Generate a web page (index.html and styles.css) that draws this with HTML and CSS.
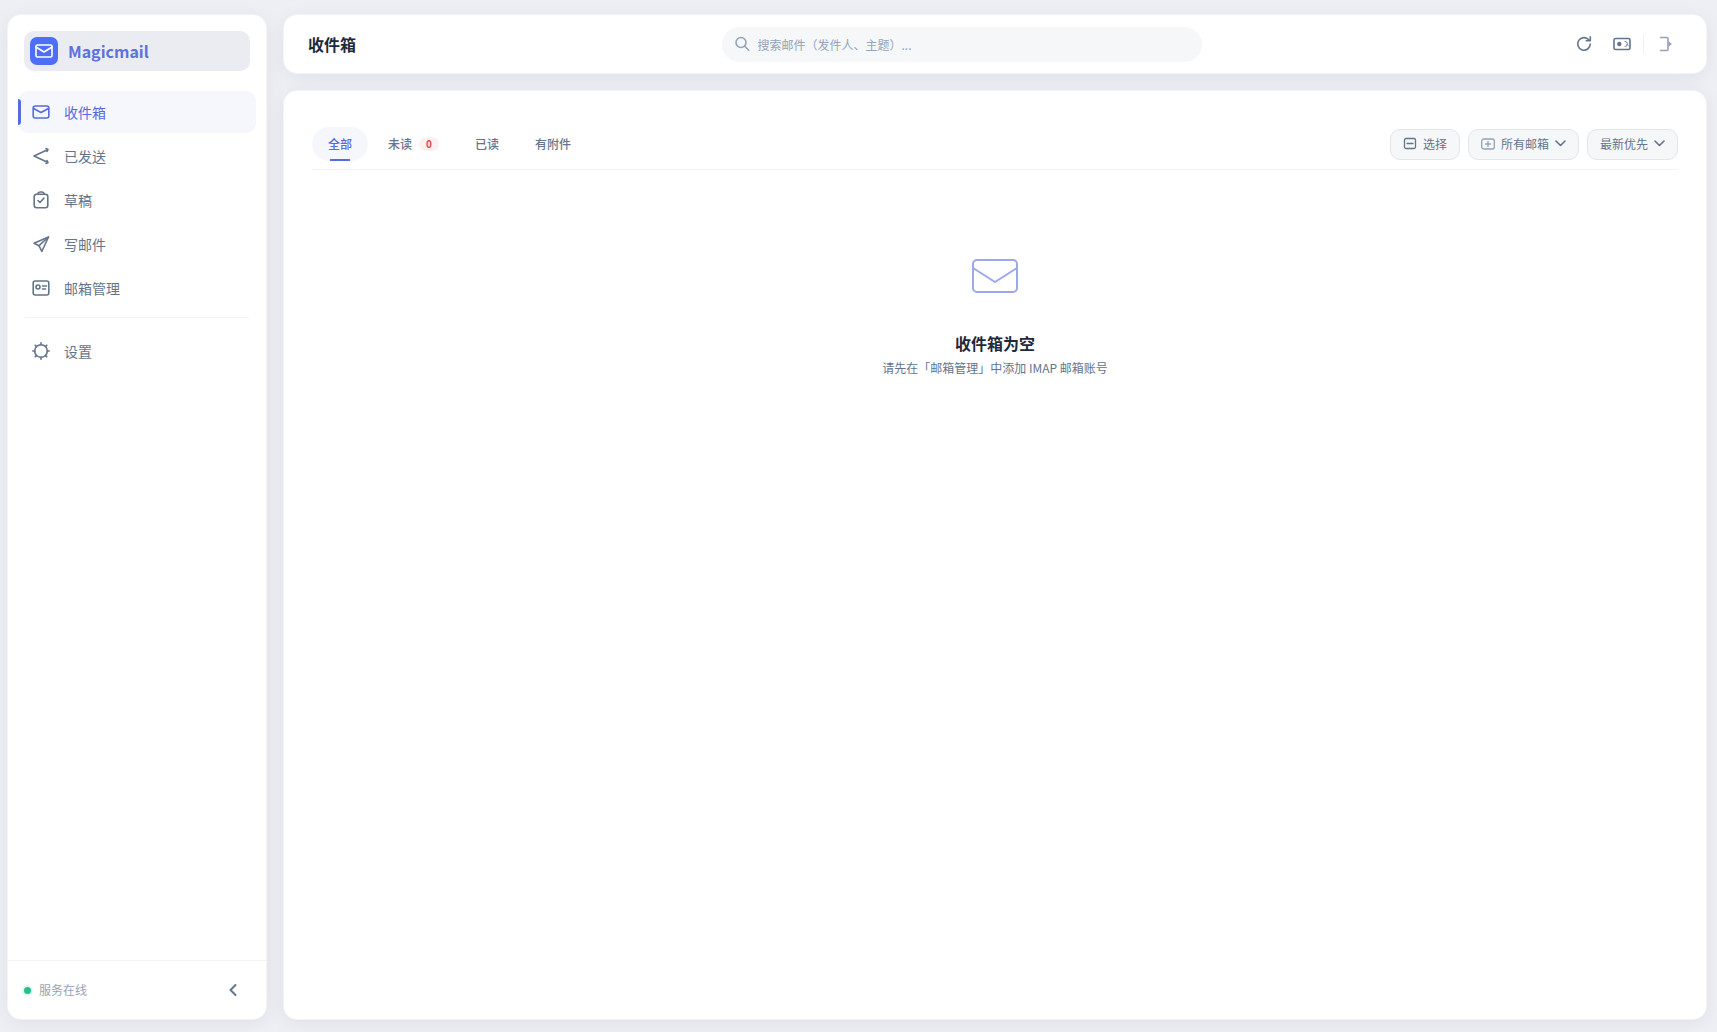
FILE: index.html
```html
<!DOCTYPE html>
<html lang="zh-CN">

<head>
    <meta charset="UTF-8">
    <meta name="viewport" content="width=device-width, initial-scale=1.0">
    <title>Magicmail - 收件箱</title>
    <link rel="stylesheet" href="styles.css">
</head>

<body>
    <div class="app">
        <!-- Sidebar -->
        <aside class="sidebar card">
            <a class="brand" href="#">
                <span class="brand-icon">
                    <svg width="20" height="20" viewBox="0 0 20 20">
                        <rect x="2" y="4" width="16" height="12" rx="1.5" />
                        <path d="M2 6l8 5 8-5" />
                    </svg>
                </span>
                <span class="brand-name">Magicmail</span>
            </a>

            <nav class="nav">
                <a class="nav-item active" href="#inbox">
                    <svg width="18" height="18" viewBox="0 0 18 18">
                        <rect x="1.2" y="3" width="15.6" height="12" rx="2" />
                        <path d="M1.5 5.5l7.5 4 7.500-4" />
                    </svg>
                    <span>收件箱</span>
                </a>
                <a class="nav-item" href="#sent">
                    <svg width="18" height="18" viewBox="0 0 18 18">
                        <path d="M15 3L2 9l13 6" />
                        <path d="M14 1.5l2 1-1 2M14 16.5l2-1-1-2" />
                    </svg>
                    <span>已发送</span>
                </a>
                <a class="nav-item" href="#drafts">
                    <svg width="18" height="18" viewBox="0 0 18 18">
                        <rect x="2.2" y="3.2" width="13.6" height="13.6" rx="2.5" />
                        <path d="M5.500 3.200C6 1.500 7 1 8 1h2c1 0 2 .5 2.500 2.200" />
                        <path d="M6 9.500l2 2 4-4.500" />
                    </svg>
                    <span>草稿</span>
                </a>
                <a class="nav-item" href="#compose">
                    <svg width="18" height="18" viewBox="0 0 18 18">
                        <path d="M16.5 2L2 8.300l5 2.400 2.800 5.800z" />
                        <path d="M16.5 2L7 10.700" />
                    </svg>
                    <span>写邮件</span>
                </a>
                <a class="nav-item" href="#accounts">
                    <svg width="18" height="18" viewBox="0 0 18 18">
                        <rect x="1.2" y="2" width="15.6" height="14" rx="2" />
                        <circle cx="6" cy="8" r="2" />
                        <path d="M10.5 7h4M10.5 10h3" />
                    </svg>
                    <span>邮箱管理</span>
                </a>
                <hr class="nav-divider">
                <a class="nav-item" href="#settings">
                    <svg width="18" height="18" viewBox="0 0 18 18">
                        <circle cx="9" cy="9" r="6.3" />
                        <path d="M9 .8v2M9 15.200v2M.8 9h2M15.200 9h2M3.200 3.200l1.200 1.200M13.600 13.600l1.200 1.200M14.800 3.200l-1.200 1.200M4.400 13.600l-1.200 1.200" />
                    </svg>
                    <span>设置</span>
                </a>
            </nav>

            <div class="sidebar-footer">
                <span class="status-dot"></span>
                <span class="status-text">服务在线</span>
                <button class="icon-btn collapse-btn" type="button" aria-label="收起侧边栏">
                    <svg width="16" height="16" viewBox="0 0 16 16">
                        <path d="M10.5 3L5.5 8l5 5" />
                    </svg>
                </button>
            </div>
        </aside>

        <div class="main">
            <!-- Top bar -->
            <header class="topbar card">
                <h1 class="page-title">收件箱</h1>
                <label class="search">
                    <svg width="16" height="16" viewBox="0 0 16 16">
                        <circle cx="7" cy="6.5" r="5" />
                        <path d="M10.700 10.200l4 4" />
                    </svg>
                    <input type="text" aria-label="搜索邮件" placeholder="搜索邮件（发件人、主题）...">
                </label>
                <div class="topbar-actions">
                    <button class="icon-btn" type="button" aria-label="刷新">
                        <svg width="18" height="18" viewBox="0 0 18 18">
                            <path d="M13.800 4.800A6.300 6.300 0 1 0 15.300 9" />
                            <path d="M15.300 1.800v4h-4" />
                        </svg>
                    </button>
                    <button class="icon-btn" type="button" aria-label="切换主题">
                        <svg width="18" height="18" viewBox="0 0 18 18">
                            <rect x="1" y="3.5" width="16" height="11" rx="1.5" />
                            <circle class="solid" cx="6.3" cy="9" r="2.2" />
                            <path class="thin" d="M12 6.500c3-.5 3.500 5 0 5M14 9.500l1 1" />
                        </svg>
                    </button>
                    <span class="separator"></span>
                    <button class="icon-btn logout-btn" type="button" aria-label="退出登录">
                        <svg width="18" height="18" viewBox="0 0 18 18">
                            <path d="M4.500 2.500h6.500a1 1 0 0 1 1 1v11a1 1 0 0 1-1 1H4.500" />
                            <path class="solid" d="M12.500 6L15.800 9l-3.300 3z" />
                        </svg>
                    </button>
                </div>
            </header>

            <!-- Mail list -->
            <main class="content card">
                <div class="toolbar">
                    <div class="tabs">
                        <button class="tab active" type="button">全部</button>
                        <button class="tab" type="button">未读<span class="badge">0</span></button>
                        <button class="tab" type="button">已读</button>
                        <button class="tab" type="button">有附件</button>
                    </div>
                    <div class="filters">
                        <button class="filter" type="button">
                            <svg class="lead" width="14" height="14" viewBox="0 0 14 14">
                                <rect x="1.5" y="1.5" width="11" height="10" rx="1.5" />
                                <path d="M4 6.500h6" />
                            </svg>
                            选择
                        </button>
                        <label class="filter">
                            <svg class="lead light" width="14" height="14" viewBox="0 0 14 14">
                                <rect x=".7" y="2" width="12.6" height="10" rx="2" />
                                <path d="M4.500 7h5M7 4.500v5" />
                            </svg>
                            <select aria-label="邮箱">
                                <option>所有邮箱</option>
                            </select>
                            <svg class="chevron" width="12" height="12" viewBox="0 0 12 12">
                                <path d="M2 3l4.500 4.500L11 3" />
                            </svg>
                        </label>
                        <label class="filter">
                            <select aria-label="排序">
                                <option>最新优先</option>
                            </select>
                            <svg class="chevron" width="12" height="12" viewBox="0 0 12 12">
                                <path d="M2 3l4.500 4.500L11 3" />
                            </svg>
                        </label>
                    </div>
                </div>

                <div class="empty">
                    <svg width="56" height="56" viewBox="0 0 56 56">
                        <rect x="6" y="12" width="44" height="32" rx="4" />
                        <path d="M6 20l22 14 22-14" />
                    </svg>
                    <h2>收件箱为空</h2>
                    <p>请先在「邮箱管理」中添加 IMAP 邮箱账号</p>
                </div>
            </main>
        </div>
    </div>
</body>

</html>
```
FILE: styles.css
```css
* {
    box-sizing: border-box;
}

body {
    margin: 0;
    background-color: #eeeff4;
    color: #64748b;
    font-family: "Noto Sans CJK SC", sans-serif;
    font-size: 12px;
    line-height: 18px;
}

button,
input,
select {
    font: inherit;
    color: inherit;
    border: none;
    background: none;
    padding: 0;
}

button,
select {
    cursor: pointer;
}

a {
    color: inherit;
    text-decoration: none;
}

svg {
    display: block;
    flex-shrink: 0;
    fill: none;
    stroke: currentColor;
    stroke-width: 1.6;
    stroke-linecap: round;
    stroke-linejoin: round;
}

.solid {
    fill: currentColor;
    stroke: none;
}

.thin {
    stroke-width: 1;
}

.app {
    display: flex;
    gap: 16px;
    min-height: 100vh;
    padding: 14px 10px 12px 7px;
}

.card {
    background-color: #fff;
    border: 1px solid #f3f4f7;
    border-radius: 14px;
    box-shadow: 0 4px 20px rgba(20, 20, 30, 0.06);
}

/* Sidebar */
.sidebar {
    display: flex;
    flex-direction: column;
    flex: 0 0 260px;
}

.brand {
    display: flex;
    align-items: center;
    gap: 10px;
    height: 40px;
    margin: 16px 16px 0;
    padding: 0 6px;
    border-radius: 10px;
    background-color: #ebecf2;
}

.brand-icon {
    display: flex;
    align-items: center;
    justify-content: center;
    width: 28px;
    height: 28px;
    border-radius: 7px;
    background-color: #4f6ef7;
    color: #fff;
}

.brand-name {
    color: #5b73de;
    font-size: 16px;
    font-weight: 700;
    line-height: 24px;
}

.nav {
    display: flex;
    flex-direction: column;
    flex: 1;
    gap: 2px;
    margin-top: 20px;
    padding: 0 10px;
}

.nav-item {
    position: relative;
    display: flex;
    align-items: center;
    gap: 14px;
    height: 42px;
    padding: 0 14px;
    border-radius: 10px;
    font-size: 14px;
    line-height: 20px;
}

.nav-item.active {
    background-color: #f5f7fd;
    color: #566bdd;
}

.nav-item.active::before {
    content: "";
    position: absolute;
    left: 0;
    top: 8px;
    width: 3px;
    height: 26px;
    border-radius: 0 3px 3px 0;
    background-color: #566bdd;
}

.nav-divider {
    width: 224px;
    height: 1px;
    margin: 6px auto 10px;
    border: none;
    background-color: #f0f2f5;
}

.sidebar-footer {
    display: flex;
    align-items: center;
    height: 59px;
    padding: 0 16px;
    border-top: 1px solid #f0f2f5;
    color: #94a3b8;
}

.status-dot {
    width: 7px;
    height: 7px;
    margin-right: 8px;
    border-radius: 50%;
    background-color: #26c08a;
    box-shadow: 0 0 0 2px #e2f8f0;
}

.icon-btn {
    display: flex;
    align-items: center;
    justify-content: center;
    width: 34px;
    height: 34px;
    border-radius: 8px;
    color: #64748b;
}

.icon-btn:hover {
    background-color: #f4f6f9;
}

.collapse-btn {
    margin-left: auto;
}

.collapse-btn svg {
    stroke-width: 2;
}

/* Top bar */
.main {
    display: flex;
    flex-direction: column;
    flex: 1;
    gap: 16px;
    min-width: 0;
}

.topbar {
    display: flex;
    align-items: center;
    justify-content: space-between;
    height: 60px;
    padding: 0 24px;
}

.page-title {
    margin: 0;
    color: #1e293b;
    font-size: 16px;
    font-weight: 700;
    line-height: 24px;
}

.search {
    display: flex;
    align-items: center;
    gap: 8px;
    width: 480px;
    height: 35px;
    padding: 0 12px;
    border-radius: 18px;
    background-color: #f5f7f9;
    color: #94a3b8;
}

.search input {
    flex: 1;
    height: 20px;
    outline: none;
}

.search input::placeholder {
    color: #94a3b8;
}

.topbar-actions {
    display: flex;
    align-items: center;
    gap: 4px;
}

.separator {
    width: 1px;
    height: 20px;
    background-color: #eef0f4;
}

.logout-btn {
    color: #94a3b8;
}

/* Mail list */
.content {
    flex: 1;
    padding: 36px 28px;
}

.toolbar {
    display: flex;
    align-items: center;
    justify-content: space-between;
    padding-bottom: 8px;
    border-bottom: 1px solid #f0f2f5;
}

.tabs {
    display: flex;
    gap: 4px;
}

.tab {
    position: relative;
    display: flex;
    align-items: center;
    gap: 7px;
    height: 34px;
    padding: 0 16px;
    border-radius: 17px;
    font-weight: 500;
}

.tab.active {
    background-color: #f5f7fd;
    color: #566bdd;
}

.tab.active::after {
    content: "";
    position: absolute;
    left: 18px;
    right: 18px;
    bottom: 0;
    height: 2px;
    background-color: #566bdd;
}

.badge {
    width: 20px;
    border-radius: 7px;
    background-color: #fdf0f0;
    color: #e04848;
    font-size: 10px;
    font-weight: 700;
    line-height: 14px;
    text-align: center;
}

.filters {
    display: flex;
    gap: 8px;
}

.filter {
    display: flex;
    align-items: center;
    gap: 4px;
    height: 31px;
    padding: 0 12px;
    border: 1px solid #e2e6ea;
    border-radius: 10px;
    background-color: #f5f7f9;
}

.filter .lead {
    margin-right: 2px;
    stroke-width: 1.3;
}

.filter .light {
    color: #94a3b8;
}

.filter select {
    appearance: none;
    outline: none;
}

.empty {
    display: flex;
    flex-direction: column;
    align-items: center;
    padding-top: 78px;
}

.empty svg {
    color: #9ca8ea;
    stroke-width: 2;
}

.empty h2 {
    margin: 27px 0 4px;
    color: #1e293b;
    font-size: 16px;
    font-weight: 700;
    line-height: 24px;
}

.empty p {
    margin: 0;
}
```
